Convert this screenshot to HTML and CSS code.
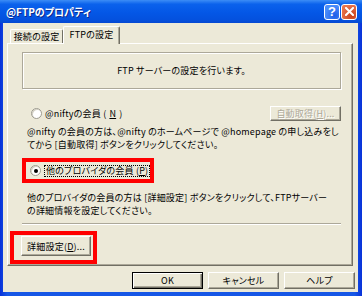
FILE: index.html
```html
<!DOCTYPE html>
<html lang="ja">
<head>
  <meta charset="UTF-8">
  <title>@FTPのプロパティ</title>
  <link rel="stylesheet" href="styles.css">
</head>
<body>

  <div class="window">

    <!-- Title bar -->
    <div class="titlebar">
      <span class="title">@FTPのプロパティ</span>
      <div class="caption-buttons">
        <span class="cap help">?</span>
        <span class="cap close">
          <svg width="9" height="9" viewBox="0 0 9 9"><path d="M1 1 L8 8 M8 1 L1 8" stroke="#fff" stroke-width="2" stroke-linecap="square"/></svg>
        </span>
      </div>
    </div>

    <div class="client">

      <!-- Tabs -->
      <div class="tabs">
        <span class="tab">接続の設定</span>
        <span class="tab active">FTPの設定</span>
      </div>

      <!-- FTP settings page -->
      <div class="panel">
        <div class="group">FTP サーバーの設定を行います。</div>

        <div class="option-row">
          <label class="radio"><span class="dot"></span>@niftyの会員 (<u>N</u>)</label>
          <span class="btn disabled">自動取得(<u>H</u>)...</span>
        </div>
        <p class="desc">@nifty の会員の方は、@nifty のホームページで @homepage の申し込みをし<br>てから [自動取得] ボタンをクリックしてください。</p>

        <div class="highlight radio-mark">
          <label class="radio checked"><span class="dot"></span><span class="focus">他のプロバイダの会員 (<u>P</u>)</span></label>
        </div>
        <p class="desc desc-other">他のプロバイダの会員の方は [詳細設定] ボタンをクリックして、FTPサーバー<br>の詳細情報を設定してください。</p>

        <div class="separator"></div>

        <div class="highlight button-mark">
          <span class="btn detail">詳細設定(<u>D</u>)...</span>
        </div>
      </div>

      <!-- Dialog buttons -->
      <div class="footer">
        <span class="btn default">OK</span>
        <span class="btn">キャンセル</span>
        <span class="btn">ヘルプ</span>
      </div>

    </div>
  </div>

</body>
</html>
```

FILE: styles.css
```css
/* General Styles */
* {
  box-sizing: border-box;
}

body {
  margin: 0;
  font-family: "Noto Sans CJK JP", "Noto Sans", sans-serif;
  font-size: 9px;
  letter-spacing: 0.2px;
  font-feature-settings: "palt";
  color: #000;
}

.window {
  width: 362px;
  height: 296px;
  display: flex;
  flex-direction: column;
  background: linear-gradient(90deg, #0831d9, #1657e6 2%, #1657e6 98%, #0831d9);
}

/* Title bar */
.titlebar {
  flex: none;
  height: 23px;
  display: flex;
  align-items: center;
  justify-content: space-between;
  padding: 0 5px 0 6px;
  background: linear-gradient(#3c8df6 0%, #0b62ec 18%, #0457e6 55%, #0451de 85%, #0548d2 100%);
  color: #fff;
}

.title {
  font-weight: bold;
  font-size: 10px;
  letter-spacing: 0;
  text-shadow: 1px 1px 0 #0c2a8c;
}

.caption-buttons {
  display: flex;
  gap: 1px;
}

.cap {
  width: 16px;
  height: 16px;
  border: 1px solid #fff;
  border-radius: 3px;
  display: flex;
  align-items: center;
  justify-content: center;
}

.help {
  background: radial-gradient(circle at 70% 75%, #1e5fe8, #4a8dfb 70%);
  font-family: "Liberation Sans", sans-serif;
  font-weight: bold;
  font-size: 13px;
  line-height: 1;
  color: #fff;
}

.close {
  background: radial-gradient(circle at 70% 75%, #c6401a, #e8744c 75%);
}

/* Dialog body */
.client {
  flex: 1;
  margin: 0 4px 4px 3px;
  background: #ece9d8;
  display: flex;
  flex-direction: column;
}

.tabs {
  height: 20px;
  display: flex;
  align-items: flex-end;
  padding-left: 7px;
}

.tab {
  height: 14px;
  width: 53px;
  display: flex;
  align-items: center;
  justify-content: center;
  border-top: 1px solid #fff;
  border-left: 1px solid #fff;
  border-right: 1px solid #716f64;
  border-radius: 2px 2px 0 0;
}

.tab.active {
  position: relative;
  z-index: 1;
  width: 57px;
  height: 18px;
  margin-bottom: -1px;
  padding-bottom: 2px;
  background: #ece9d8;
  box-shadow: inset -1px 0 0 #aca899;
}

.panel {
  height: 223px;
  margin: 0 5px 0 4px;
  padding: 8px 11px 0 14px;
  border-top: 1px solid #fff;
  border-left: 1px solid #fff;
  border-right: 1px solid #716f64;
  border-bottom: 1px solid #716f64;
  box-shadow: inset -1px -1px 0 #aca899;
}

.group {
  height: 37px;
  display: flex;
  align-items: center;
  justify-content: center;
  border: 1px solid #aca899;
  box-shadow: inset 1px 1px 0 #fff, 1px 1px 0 #fff;
}

.option-row {
  height: 16px;
  margin-top: 16px;
  display: flex;
  align-items: center;
  justify-content: space-between;
}

.radio {
  display: flex;
  align-items: center;
  gap: 3px;
  padding-left: 9px;
}

.dot {
  width: 11px;
  height: 11px;
  border-radius: 50%;
  background: #fff;
  border: 1px solid #9d9b8f;
  box-shadow: inset 1px 1px 0 #d6d3c6;
  display: flex;
  align-items: center;
  justify-content: center;
}

.radio.checked .dot::after {
  content: "";
  width: 4px;
  height: 4px;
  border-radius: 50%;
  background: #000;
}

.focus {
  border: 1px dotted #000;
  padding: 0 1px;
  line-height: 10px;
}

.desc {
  margin: 4px 0 0;
  padding-left: 5px;
  line-height: 13px;
  white-space: nowrap;
}

.desc-other {
  margin-top: 8px;
}

/* Red marks */
.highlight {
  border: 4px solid #f00;
  display: flex;
  align-items: center;
}

.radio-mark {
  width: 132px;
  height: 25px;
  margin-top: 7px;
}

.radio-mark .radio {
  padding-left: 4px;
  white-space: nowrap;
}

.separator {
  height: 2px;
  margin-top: 6px;
  border-top: 1px solid #aca899;
  border-bottom: 1px solid #fff;
}

.button-mark {
  width: 87px;
  height: 33px;
  margin: 6px 0 0 -12px;
  padding: 1px 2px 4px 7px;
}

/* Buttons */
.btn {
  width: 71px;
  height: 17px;
  display: flex;
  align-items: center;
  justify-content: center;
  background: #ece9d8;
  border-top: 1px solid #fff;
  border-left: 1px solid #fff;
  border-right: 1px solid #716f64;
  border-bottom: 1px solid #716f64;
  box-shadow: inset -1px -1px 0 #aca899;
}

.btn.disabled {
  height: 15px;
  color: #aca899;
  text-shadow: 1px 1px 0 #fff;
}

.btn.detail {
  width: 70px;
  height: 20px;
}

.btn.default {
  border: 1px solid #000;
  box-shadow: inset 1px 1px 0 #fff, inset -1px -1px 0 #716f64, inset -2px -2px 0 #aca899;
}

.footer {
  margin-top: 6px;
  display: flex;
  justify-content: flex-end;
  gap: 5px;
  padding-right: 3px;
}
```
